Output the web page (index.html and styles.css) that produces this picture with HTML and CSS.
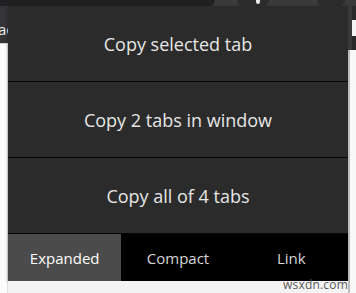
FILE: index.html
```html
<!DOCTYPE html>
<html>
<head>
<meta charset="utf-8">
<link rel="stylesheet" href="styles.css">
</head>
<body>
<div class="page">
  <div class="chrome-top">
    <div class="omni"></div>
    <div class="pill pill-a"><span class="pill-mark"></span></div>
    <div class="pill pill-b"></div>
  </div>
  <div class="main">
    <div class="side side-left">
      <div class="side-dark"><span class="side-text">ac</span></div>
      <div class="side-light"></div>
    </div>
    <div class="center">
      <div class="popup">
        <div class="action">Copy selected tab</div>
        <div class="action">Copy 2 tabs in window</div>
        <div class="action">Copy all of 4 tabs</div>
        <div class="tabs">
          <div class="tab tab-active">Expanded</div>
          <div class="tab">Compact</div>
          <div class="tab">Link</div>
        </div>
      </div>
      <div class="below"></div>
    </div>
    <div class="side side-right">
      <div class="side-dark-r"><span class="edge-box"></span></div>
      <div class="side-light-r"></div>
    </div>
  </div>
  <div class="watermark">wsxdn.com</div>
</div>
</body>
</html>
```
FILE: styles.css
```css
html, body {
  margin: 0;
  padding: 0;
}
body {
  width: 356px;
  height: 293px;
  overflow: hidden;
  background: #f3f3f3;
  font-family: "Open Sans", "Noto Sans", sans-serif;
}
.page {
  position: relative;
  width: 356px;
  height: 293px;
  display: flex;
  flex-direction: column;
}
.chrome-top {
  height: 6px;
  background: #3a3a3d;
  display: flex;
  align-items: flex-start;
  overflow: hidden;
}
.omni {
  width: 215px;
  height: 6px;
  background: #202022;
  border-bottom-right-radius: 6px;
}
.pill {
  height: 12px;
  margin-top: -6px;
  border-radius: 8px;
  background: #2c2c2e;
  display: flex;
  justify-content: center;
}
.pill-a {
  width: 32px;
  margin-left: 22px;
}
.pill-mark {
  width: 4px;
  height: 10px;
  background: #e8e8e8;
  border-radius: 0 0 2px 2px;
  margin-left: 10px;
}
.pill-b {
  width: 28px;
  margin-left: 48px;
}
.main {
  flex: 1;
  display: flex;
}
.side {
  width: 8px;
  display: flex;
  flex-direction: column;
}
.side-dark {
  height: 37px;
  background: #353538;
  overflow: hidden;
  display: flex;
  align-items: flex-end;
}
.side-text {
  color: #f0f0f0;
  font-size: 15px;
  line-height: 20px;
  margin-left: -2px;
  margin-bottom: 4px;
}
.side-light {
  flex: 1;
  background: #fbfbfb;
  border-top: 1px solid #cfcfcf;
  border-right: 1px solid #e2e2e2;
}
.side-dark-r {
  height: 44px;
  background: #2a2a2a;
  border-left: 4px solid #3a3a3a;
  display: flex;
  flex-direction: column;
}
.edge-box {
  display: block;
  width: 4px;
  height: 16px;
  margin-top: 14px;
  background: #f4f4f4;
}
.side-light-r {
  flex: 1;
  background: #f8f8f8;
  border-left: 2px solid #bdbdbd;
}
.center {
  width: 340px;
  display: flex;
  flex-direction: column;
}
.popup {
  background: #2b2b2b;
  display: flex;
  flex-direction: column;
  box-shadow: 0 1px 3px rgba(0,0,0,0.35);
}
.action {
  height: 75px;
  border-bottom: 1px solid #060606;
  display: flex;
  align-items: center;
  justify-content: center;
  color: #e6e6e6;
  font-size: 18px;
}
.tabs {
  height: 47px;
  background: #000;
  display: flex;
}
.tab {
  flex: 1;
  display: flex;
  align-items: center;
  justify-content: center;
  color: #d6d6d6;
  font-size: 15px;
}
.tab-active {
  background: #4b4b4b;
  color: #ffffff;
}
.below {
  flex: 1;
  background: #f3f3f3;
}
.watermark {
  position: absolute;
  left: 283px;
  top: 278px;
  font-size: 12px;
  line-height: 14px;
  color: #5a5a5a;
  letter-spacing: 0.2px;
}
```
